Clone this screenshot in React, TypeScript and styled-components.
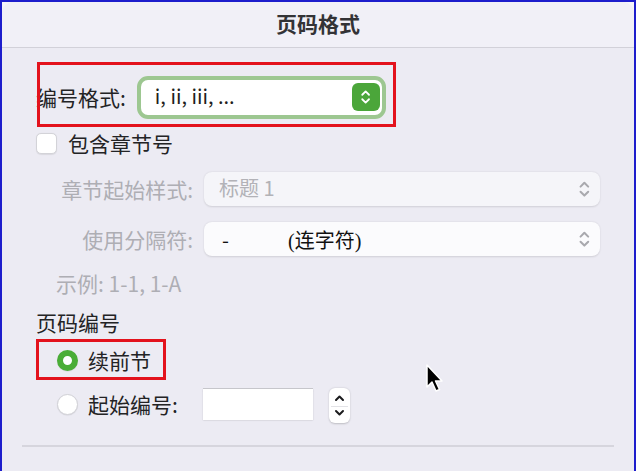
import React from "react";
import styled, { createGlobalStyle } from "styled-components";

const GlobalStyle = createGlobalStyle`
  html, body {
    margin: 0;
    padding: 0;
    background: #f4f4f8;
  }
  *, *::before, *::after {
    box-sizing: border-box;
  }
`;

const SANS = `"Noto Sans CJK SC", "Liberation Sans", sans-serif`;

const Frame = styled.div`
  position: relative;
  width: 636px;
  height: 471px;
  border: 2px solid #1d1dcc;
  border-bottom: none;
  background: #f6f5fa;
  overflow: hidden;
  font-family: ${SANS};
`;

const Sheet = styled.div`
  height: 100%;
  border-radius: 12px 12px 0 0;
  background: #ecebf3;
  overflow: hidden;
`;

const TitleBar = styled.div`
  height: 46px;
  display: flex;
  align-items: center;
  justify-content: center;
  background: #f1f0f7;
  border-bottom: 1px solid #d2d1d9;
  font-size: 21px;
  line-height: 1;
  font-weight: 600;
  color: #333336;
  padding-bottom: 3px;
`;

const Body = styled.div`
  padding: 0 20px;
  display: flex;
  flex-direction: column;
`;

const Form = styled.div`
  padding-left: 14px;
  display: flex;
  flex-direction: column;
`;

const Highlight = styled.div<{ $w: number; $h: number; $dx: number; $dy: number; $mt?: number }>`
  position: relative;
  margin-top: ${({ $mt }) => $mt ?? 0}px;
  &::after {
    content: "";
    position: absolute;
    left: ${({ $dx }) => $dx}px;
    top: ${({ $dy }) => $dy}px;
    width: ${({ $w }) => $w}px;
    height: ${({ $h }) => $h}px;
    border: 3px solid #e3121c;
    pointer-events: none;
  }
`;

const FormatRow = styled.div`
  height: 46px;
  display: flex;
  align-items: center;
  gap: 11px;
`;

const Label = styled.span<{ $muted?: boolean }>`
  font-size: 21px;
  line-height: 28px;
  color: ${({ $muted }) => ($muted ? "#aeaeb4" : "#232325")};
  white-space: nowrap;
`;

const FocusSelect = styled.div`
  width: 249px;
  height: 43px;
  border: 4px solid #9dc791;
  border-radius: 11px;
  background: #ffffff;
  display: flex;
  align-items: center;
  justify-content: space-between;
  padding: 0 2px 0 14px;
`;

const SelectText = styled.span<{ $muted?: boolean }>`
  font-size: 20px;
  line-height: 1;
  padding-bottom: 2px;
  color: ${({ $muted }) => ($muted ? "#b2b2b7" : "#1f1f21")};
`;

const GreenButton = styled.div`
  width: 28px;
  height: 28px;
  border-radius: 6px;
  background: #4ba63a;
  display: flex;
  align-items: center;
  justify-content: center;
`;

const CheckRow = styled.label`
  margin-top: 9px;
  display: flex;
  align-items: center;
  gap: 11px;
`;

const CheckBox = styled.span`
  width: 21px;
  height: 21px;
  border-radius: 5px;
  background: #ffffff;
  border: 1px solid #d3d3d8;
  box-shadow: 0 0.5px 1px rgba(0, 0, 0, 0.08);
`;

const OptionGrid = styled.div`
  margin-top: 15px;
  display: grid;
  grid-template-columns: 157px 396px;
  column-gap: 11px;
  row-gap: 16px;
  align-items: center;
`;

const RightLabel = styled(Label)`
  text-align: right;
`;

const PopUp = styled.div<{ $bright?: boolean }>`
  height: 34px;
  border-radius: 8px;
  background: ${({ $bright }) => ($bright ? "#fbfbfd" : "#f5f5f9")};
  box-shadow: 0 0.5px 2px rgba(0, 0, 0, 0.12);
  display: flex;
  align-items: center;
  padding: 0 9px 0 15px;
`;

const Dash = styled.span`
  font-family: ${SANS};
  font-size: 20px;
  color: #111;
  width: 69px;
  padding-left: 3px;
`;

const SerifText = styled.span`
  font-family: "Liberation Serif", "Noto Sans CJK SC", serif;
  font-size: 20px;
  color: #111;
  flex: 1;
`;

const Spacer = styled.span`
  flex: 1;
`;

const Example = styled(Label)`
  margin-top: 13px;
  padding-left: 20px;
`;

const SectionTitle = styled(Label)`
  margin-top: 11px;
`;

const RadioList = styled.div`
  display: flex;
  flex-direction: column;
  padding-left: 21px;
  margin-top: 10px;
  gap: 16px;
`;

const RadioRow = styled.div`
  display: flex;
  align-items: center;
  gap: 10px;
  height: 28px;
`;

const Radio = styled.span<{ $on?: boolean }>`
  width: 21px;
  height: 21px;
  border-radius: 50%;
  flex-shrink: 0;
  background: #ffffff;
  border: ${({ $on }) => ($on ? "6px solid #4aad37" : "1px solid #d2d2d7")};
  box-shadow: 0 0.5px 1px rgba(0, 0, 0, 0.1);
`;

const NumberInput = styled.div`
  width: 110px;
  height: 32px;
  margin-left: 15px;
  background: #ffffff;
  border-top: 1px solid #c6c6cb;
  box-shadow: 0 0.5px 1.5px rgba(0, 0, 0, 0.18);
`;

const Stepper = styled.div`
  width: 21px;
  height: 35px;
  margin-left: 6px;
  margin-top: 3px;
  border-radius: 6px;
  background: #ffffff;
  box-shadow: 0 0.5px 2px rgba(0, 0, 0, 0.2);
  display: flex;
  flex-direction: column;
  align-items: center;
  justify-content: space-evenly;
  position: relative;
  &::after {
    content: "";
    position: absolute;
    left: 2px;
    right: 2px;
    top: 50%;
    height: 1px;
    background: #e2e2e6;
  }
`;

const Divider = styled.div`
  margin-top: 27px;
  height: 2px;
  background: #d6d5dd;
`;

const Cursor = styled.svg`
  position: absolute;
  left: 423px;
  top: 361px;
`;

const UpDown = ({ color, size = 14 }: { color: string; size?: number }) => (
  <svg width={size * 0.75} height={size * 1.2} viewBox="0 0 10 16">
    <path
      d="M2 6 L5 3 L8 6 M2 10 L5 13 L8 10"
      fill="none"
      stroke={color}
      strokeWidth={1.6}
      strokeLinecap="round"
      strokeLinejoin="round"
    />
  </svg>
);

const Chevron = ({ up }: { up?: boolean }) => (
  <svg width="11" height="8" viewBox="0 0 11 8">
    <path
      d={up ? "M2 6 L5.5 2.5 L9 6" : "M2 2 L5.5 5.5 L9 2"}
      fill="none"
      stroke="#1c1c1e"
      strokeWidth={2}
      strokeLinecap="round"
      strokeLinejoin="round"
    />
  </svg>
);

export default function App() {
  return (
    <>
      <GlobalStyle />
      <Frame>
        <Sheet>
          <TitleBar>页码格式</TitleBar>
          <Body>
            <Form>
              <Highlight $w={359} $h={65} $dx={1} $dy={-12} $mt={26}>
                <FormatRow>
                  <Label>编号格式:</Label>
                  <FocusSelect>
                    <SelectText>i, ii, iii, ...</SelectText>
                    <GreenButton>
                      <UpDown color="#ffffff" size={15} />
                    </GreenButton>
                  </FocusSelect>
                </FormatRow>
              </Highlight>

              <CheckRow>
                <CheckBox />
                <Label>包含章节号</Label>
              </CheckRow>

              <OptionGrid>
                <RightLabel $muted>章节起始样式:</RightLabel>
                <PopUp>
                  <SelectText $muted>标题 1</SelectText>
                  <Spacer />
                  <UpDown color="#a9a9ae" size={17} />
                </PopUp>
                <RightLabel $muted>使用分隔符:</RightLabel>
                <PopUp $bright>
                  <Dash>-</Dash>
                  <SerifText>(连字符)</SerifText>
                  <UpDown color="#a9a9ae" size={17} />
                </PopUp>
              </OptionGrid>

              <Example $muted>示例: 1-1, 1-A</Example>

              <SectionTitle>页码编号</SectionTitle>

              <RadioList>
                <Highlight $w={130} $h={41} $dx={-21} $dy={-7}>
                  <RadioRow>
                    <Radio $on />
                    <Label>续前节</Label>
                  </RadioRow>
                </Highlight>
                <RadioRow>
                  <Radio />
                  <Label>起始编号:</Label>
                  <NumberInput />
                  <Stepper>
                    <Chevron up />
                    <Chevron />
                  </Stepper>
                </RadioRow>
              </RadioList>
            </Form>
            <Divider />
          </Body>
        </Sheet>
        <Cursor width="18" height="30" viewBox="0 0 18 30">
          <path
            d="M2 2 L2 24 L7 19 L11 28 L14.5 26.5 L10.5 18 L17 18 Z"
            fill="#000000"
            stroke="#ffffff"
            strokeWidth={1.5}
            strokeLinejoin="round"
          />
        </Cursor>
      </Frame>
    </>
  );
}
